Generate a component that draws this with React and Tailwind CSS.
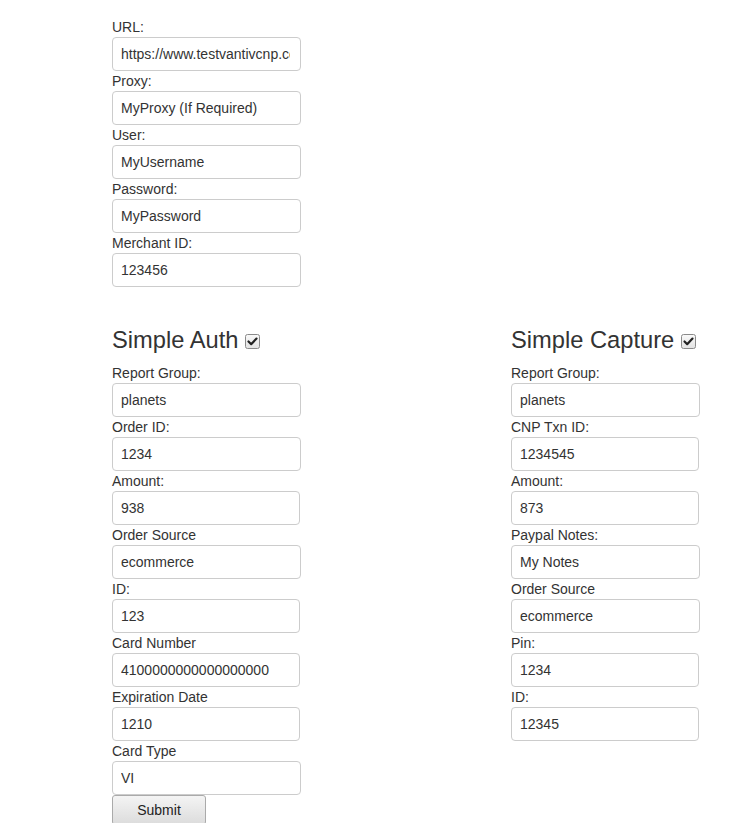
const top = [
  { label: 'URL:', value: 'https://www.testvantivcnp.com/sandbox/communicator/online', w: 'w-[189px]' },
  { label: 'Proxy:', value: 'MyProxy (If Required)', w: 'w-[189px]' },
  { label: 'User:', value: 'MyUsername', w: 'w-[189px]' },
  { label: 'Password:', value: 'MyPassword', w: 'w-[189px]' },
  { label: 'Merchant ID:', value: '123456', w: 'w-[189px]' },
];

const auth = [
  { label: 'Report Group:', value: 'planets', w: 'w-[189px]' },
  { label: 'Order ID:', value: '1234', w: 'w-[189px]' },
  { label: 'Amount:', value: '938', w: 'w-[188px]' },
  { label: 'Order Source', value: 'ecommerce', w: 'w-[189px]' },
  { label: 'ID:', value: '123', w: 'w-[188px]' },
  { label: 'Card Number', value: '4100000000000000000', w: 'w-[188px]' },
  { label: 'Expiration Date', value: '1210', w: 'w-[188px]' },
  { label: 'Card Type', value: 'VI', w: 'w-[189px]' },
];

const capture = [
  { label: 'Report Group:', value: 'planets', w: 'w-[189px]' },
  { label: 'CNP Txn ID:', value: '1234545', w: 'w-[188px]' },
  { label: 'Amount:', value: '873', w: 'w-[188px]' },
  { label: 'Paypal Notes:', value: 'My Notes', w: 'w-[189px]' },
  { label: 'Order Source', value: 'ecommerce', w: 'w-[189px]' },
  { label: 'Pin:', value: '1234', w: 'w-[188px]' },
  { label: 'ID:', value: '12345', w: 'w-[188px]' },
];

function Field({ label, value, w }) {
  return (
    <div className="flex flex-col">
      <label className="h-[20px] text-[14px] leading-[20px] text-[#333]">{label}</label>
      <input
        type="text"
        readOnly
        defaultValue={value}
        className={`${w} h-[34px] rounded-[4px] border border-[#ccc] bg-white pl-[8px] pr-[10px] text-[14px] text-[#333] outline-none`}
      />
    </div>
  );
}

function Check() {
  return (
    <svg width="15" height="15" viewBox="0 0 15 15" className="mt-[2px]">
      <defs>
        <linearGradient id="cb" x1="0" y1="0" x2="0" y2="1">
          <stop offset="0" stopColor="#fafafa" />
          <stop offset="1" stopColor="#e2e2e2" />
        </linearGradient>
      </defs>
      <rect x="0.5" y="0.5" width="14" height="14" rx="2" fill="url(#cb)" stroke="#8a8a8a" />
      <path d="M3.5 7.5 L6.2 10.2 L11.5 4.6" fill="none" stroke="#222" strokeWidth="2.2" strokeLinecap="round" strokeLinejoin="round" />
    </svg>
  );
}

function Heading({ children }) {
  return (
    <div className="mt-[40px] mb-[10px] flex h-[26px] items-center gap-[7px] text-[23.7px] leading-[26px] text-[#333]">
      <span>{children}</span>
      <Check />
    </div>
  );
}

export default function App() {
  return (
    <div className="min-h-screen bg-white pl-[112px] pt-[17px] font-['Liberation_Sans',Arial,sans-serif]">
      <div className="flex flex-col">
        {top.map((f) => (
          <Field key={f.label} {...f} />
        ))}
      </div>
      <div className="flex">
        <div className="flex w-[399px] flex-col">
          <Heading>Simple Auth</Heading>
          {auth.map((f) => (
            <Field key={f.label} {...f} />
          ))}
          <div>
            <button className="h-[30px] w-[94px] rounded-[3px] border border-[#aaa] bg-gradient-to-b from-[#f4f4f4] to-[#dcdcdc] text-[14px] text-[#222]">
              Submit
            </button>
          </div>
        </div>
        <div className="flex flex-col">
          <Heading>Simple Capture</Heading>
          {capture.map((f) => (
            <Field key={f.label} {...f} />
          ))}
        </div>
      </div>
    </div>
  );
}
